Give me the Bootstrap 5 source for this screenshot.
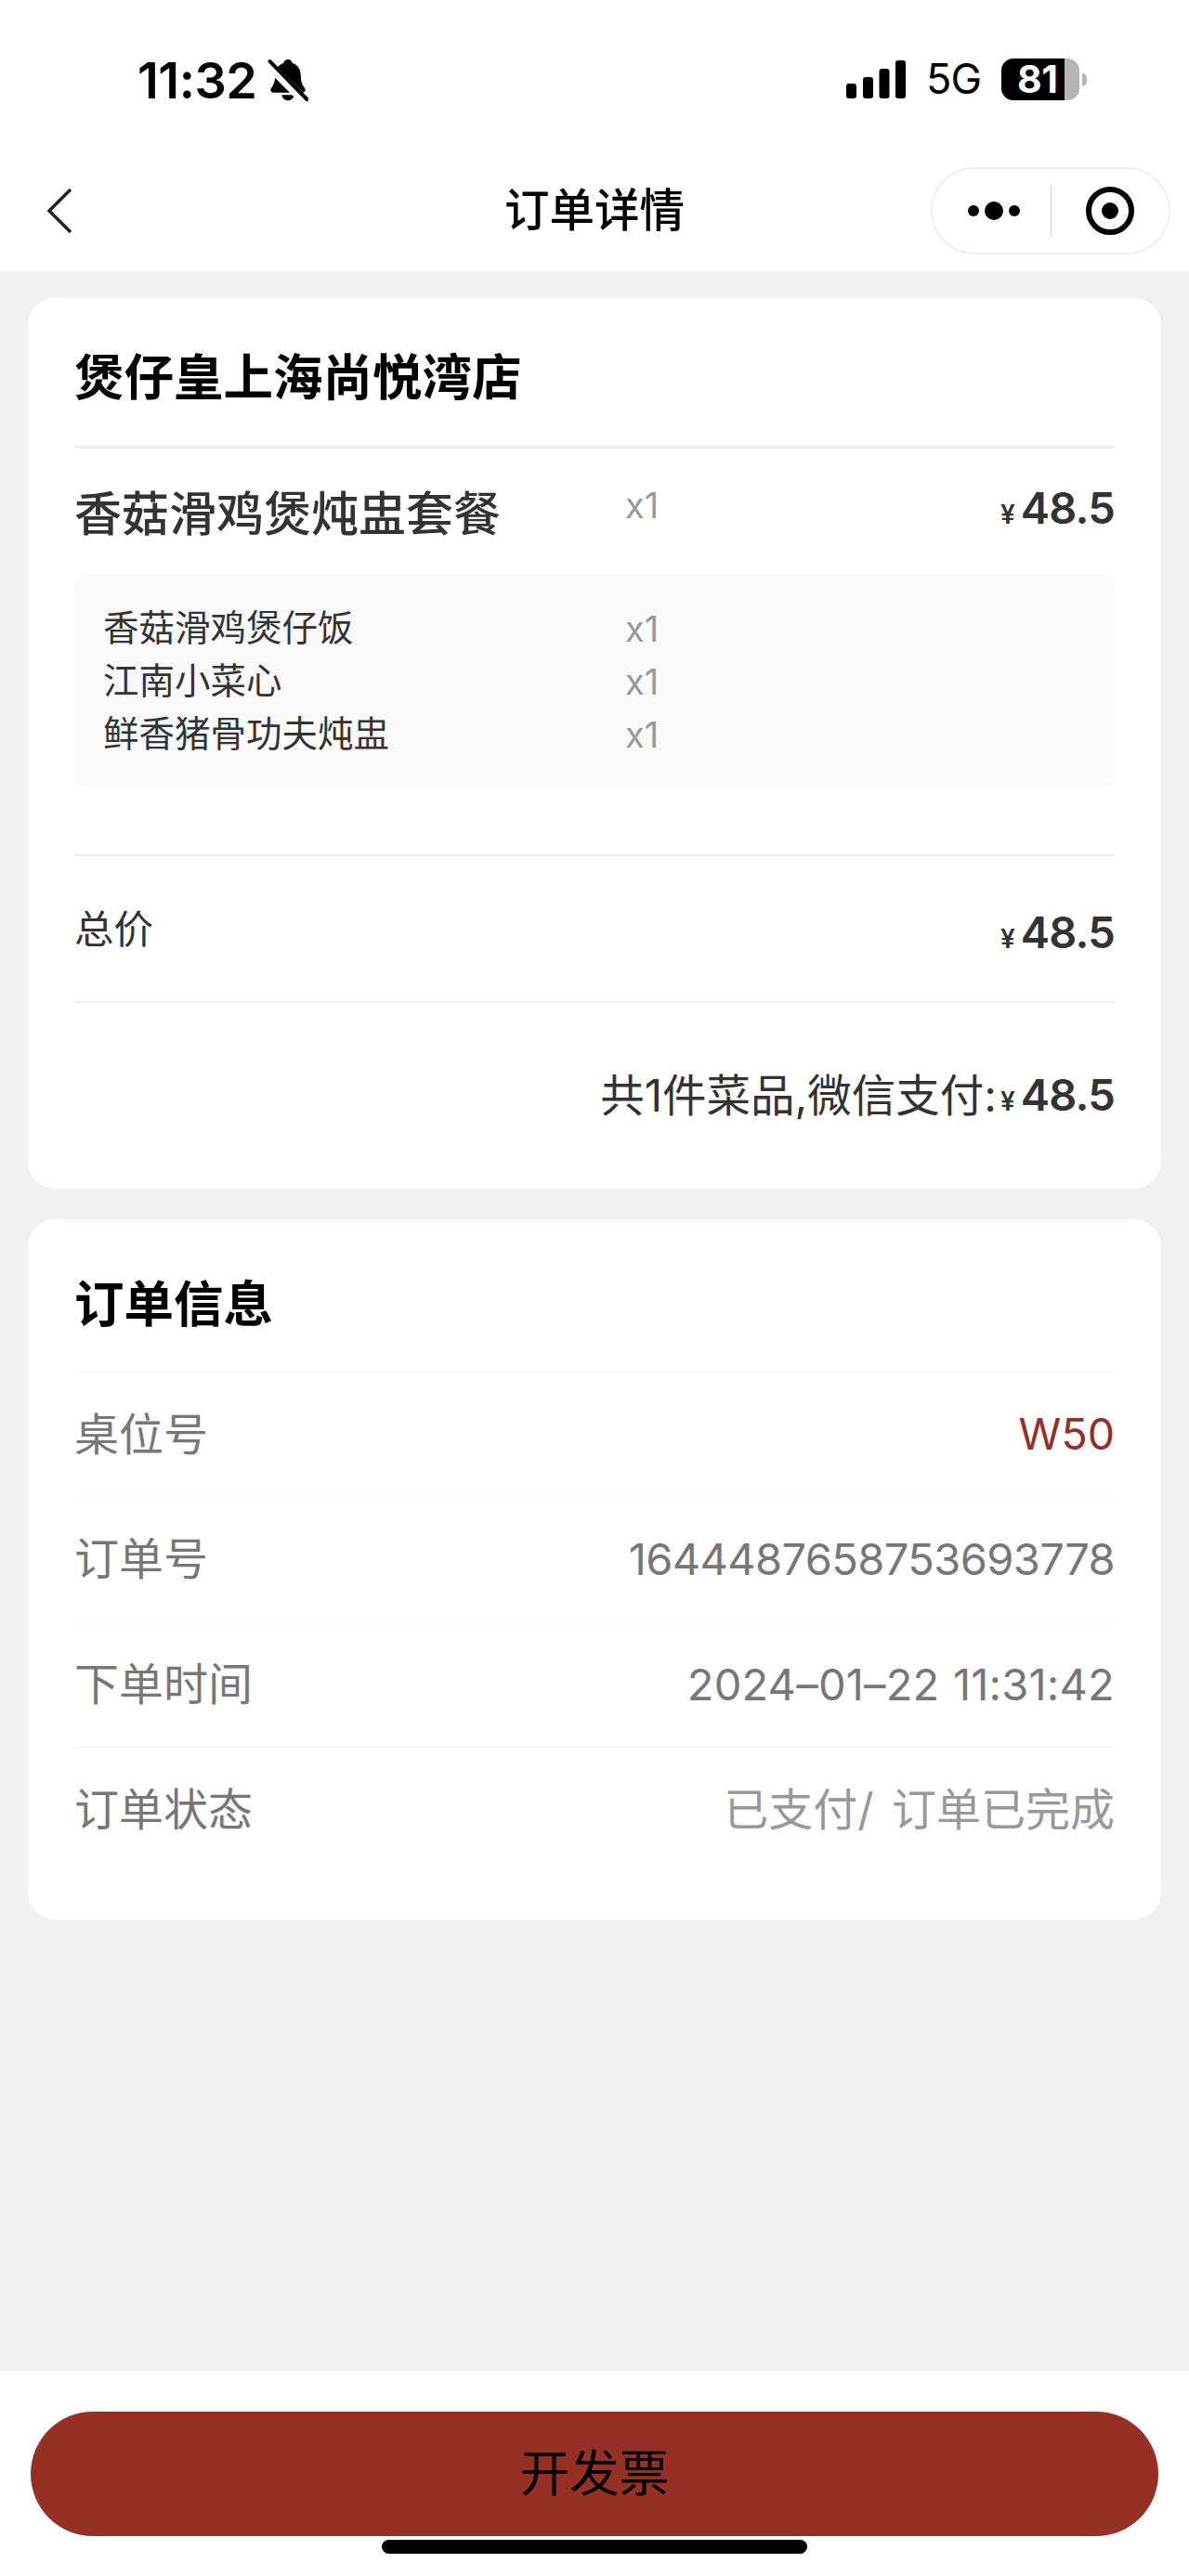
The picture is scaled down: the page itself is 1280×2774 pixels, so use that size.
<!DOCTYPE html>
<html lang="zh-CN">
<head>
<meta charset="utf-8">
<title>订单详情</title>
<link href="https://cdn.jsdelivr.net/npm/bootstrap@5.3.0/dist/css/bootstrap.min.css" rel="stylesheet">
<style>
html,body{height:2774px;}
body{width:1280px;background:#f1f1f1;font-family:Inter,"Noto Sans CJK SC",sans-serif;color:#000;overflow:hidden;}
.page-shell{height:2774px;}
.status-strip{height:172px;padding:63px 110px 0 148px;align-items:flex-start;}
.clock{font-size:54px;line-height:48px;font-weight:600;letter-spacing:-.5px;}
.bell-ico{width:44px;height:46px;margin-left:12px;margin-top:0;}
.sig-ico{width:64px;height:41px;margin-top:2px;}
.net-label{font-size:45px;line-height:44px;margin:0 22px;letter-spacing:-1px;}
.batt-wrap{width:92px;height:45px;}
.batt-body{width:84px;height:45px;border-radius:13px;background:linear-gradient(90deg,#000 0,#000 68px,#b5b5b5 68px);color:#fff;font-size:41px;font-weight:700;line-height:45px;padding-left:17px;letter-spacing:-.5px;}
.batt-nub{width:5px;height:14px;margin-left:3px;background:#b5b5b5;border-radius:0 7px 7px 0;}
.nav-strip{height:120px;padding:0 20px 10px 20px;display:grid;grid-template-columns:1fr auto 1fr;align-items:center;}
.nav-title{font-size:48.500px;line-height:60px;font-weight:500;}
.back-ico{width:28px;height:50px;margin-left:30px;}
.capsule{justify-self:end;width:258px;height:94px;border:2px solid #eee;border-radius:47px;}
.cap-side{flex:1 1 0;}
.cap-dots{margin-left:6px;}
.cap-rule{width:1px;height:56px;background:#ccc;}
.content-area{padding:29px 30px 0;gap:33px;}
.panel{border-radius:30px;padding:0 50px;background:#fff;border:0;}
.panel-title{font-size:53.500px;line-height:68px;font-weight:700;margin:0;}
.panel-a{height:959px;padding-top:52px;}
.panel-a .panel-title{margin-bottom:39px;}
.rule-a{height:3px;background:#eee;}
.rule-b{height:2px;background:#eee;}
.rule-top{margin-top:72px;}
.item-row{height:136px;padding-top:38px;}
.name-col{width:593px;flex:none;}
.item-name{font-size:51px;line-height:66px;font-weight:500;color:#333;}
.qty{font-size:38px;line-height:50px;color:#999;}
.item-row .qty{margin-top:-2px;}
.item-row .amount{margin-top:-4px;}
.amount{margin-left:auto;font-size:47px;line-height:60px;font-weight:600;color:#333;letter-spacing:-.8px;}
.yen{font-size:28px;font-weight:600;margin-right:6px;letter-spacing:0;}
.sub-box{height:229px;background:#f9f9f9;border-radius:10px;padding:29px 31px 0;}
.sub-row{height:57px;align-items:center;}
.sub-name{font-size:38.500px;line-height:57px;color:#333;}
.sub-row .name-col{width:562px;}
.total-row{height:156px;padding-top:50px;}
.total-row .amount{margin-top:2px;}
.total-label{font-size:42.500px;line-height:58px;color:#333;}
.pay-row{height:200px;padding-top:69px;font-size:47.500px;line-height:62px;color:#333;}
.panel-b{height:754px;padding-top:58px;}
.panel-b .panel-title{margin-bottom:38px;}
.info-list .list-group-item{height:134.600px;padding:0;background:transparent;border:0;border-top:1px solid #f5f5f5;font-size:48px;color:#777;}
.info-red{color:#962f24;font-size:46.500px;}
.info-num{font-size:47px;letter-spacing:-.6px;color:#777;}
.info-date{font-size:47px;letter-spacing:.2px;word-spacing:1px;color:#777;}
.info-gray{color:#999;word-spacing:6px;}
.foot-strip{height:221px;padding:44px 33px 0;}
.invoice-btn{display:block;width:100%;height:134px;background:#962f24;border:0;border-radius:67px;color:#000;font-size:53.500px;line-height:134px;padding:0;}
.home-pill{width:458px;height:15px;background:#000;border-radius:8px;margin:4px auto 0;}
</style>
</head>
<body>
<div class="page-shell d-flex flex-column">
  <header class="bg-white">
    <div class="status-strip d-flex justify-content-between">
      <div class="d-flex align-items-start">
        <span class="clock">11:32</span>
        <svg class="bell-ico" viewBox="0 0 42 45" aria-hidden="true">
          <path d="M21 1c2.600 0 4.300 1.800 4.700 3.900C31.500 6.700 34.500 11.500 34.500 18c0 5.500 1.200 9.500 4 13 1.600 2 .6 5-2.200 5H5.700c-2.800 0-3.800-3-2.200-5 2.800-3.500 4-7.500 4-13 0-6.500 3-11.300 8.800-13.100C16.700 2.800 18.400 1 21 1z" fill="#000"/>
          <path d="M14.500 38.500h13c-.5 3.500-3.200 5.800-6.500 5.800s-6-2.300-6.500-5.800z" fill="#000"/>
          <path d="M-1 5l42 42" stroke="#fff" stroke-width="10" fill="none"/>
          <path d="M2 3l39 40" stroke="#000" stroke-width="4" stroke-linecap="round" fill="none"/>
        </svg>
      </div>
      <div class="d-flex align-items-start">
        <svg class="sig-ico" viewBox="0 0 64 41" aria-hidden="true">
          <rect x="0" y="25" width="11" height="16" rx="3" fill="#000"/>
          <rect x="18" y="18" width="11" height="23" rx="3" fill="#000"/>
          <rect x="35.500" y="9" width="11" height="32" rx="3" fill="#000"/>
          <rect x="53" y="0" width="11" height="41" rx="3" fill="#000"/>
        </svg>
        <span class="net-label">5G</span>
        <div class="batt-wrap d-flex align-items-center">
          <div class="batt-body">81</div>
          <div class="batt-nub"></div>
        </div>
      </div>
    </div>
    <div class="nav-strip">
      <svg class="back-ico" viewBox="0 0 28 50" aria-hidden="true"><path d="M26 2L3 25l23 23" fill="none" stroke="#222" stroke-width="3.500"/></svg>
      <div class="nav-title">订单详情</div>
      <div class="capsule d-flex align-items-center">
        <div class="cap-side d-flex justify-content-center">
          <svg class="cap-dots" width="60" height="24" viewBox="0 0 60 24" aria-hidden="true"><circle cx="8" cy="12" r="6" fill="#000"/><circle cx="30" cy="12" r="10" fill="#000"/><circle cx="52" cy="12" r="6" fill="#000"/></svg>
        </div>
        <div class="cap-rule"></div>
        <div class="cap-side d-flex justify-content-center">
          <svg width="52" height="52" viewBox="0 0 52 52" aria-hidden="true"><circle cx="26" cy="26" r="23" fill="none" stroke="#000" stroke-width="6"/><circle cx="26" cy="26" r="9" fill="#000"/></svg>
        </div>
      </div>
    </div>
  </header>

  <main class="content-area d-flex flex-column">
    <section class="card panel panel-a">
      <h1 class="panel-title">煲仔皇上海尚悦湾店</h1>
      <div class="rule-a"></div>
      <div class="item-row d-flex align-items-start">
        <div class="name-col item-name">香菇滑鸡煲炖盅套餐</div>
        <div class="qty">x1</div>
        <div class="amount"><span class="yen">¥</span>48.5</div>
      </div>
      <div class="sub-box">
        <div class="sub-row d-flex"><div class="name-col sub-name">香菇滑鸡煲仔饭</div><div class="qty">x1</div></div>
        <div class="sub-row d-flex"><div class="name-col sub-name">江南小菜心</div><div class="qty">x1</div></div>
        <div class="sub-row d-flex"><div class="name-col sub-name">鲜香猪骨功夫炖盅</div><div class="qty">x1</div></div>
      </div>
      <div class="rule-b rule-top"></div>
      <div class="total-row d-flex align-items-start">
        <div class="total-label">总价</div>
        <div class="amount"><span class="yen">¥</span>48.5</div>
      </div>
      <div class="rule-b"></div>
      <div class="pay-row d-flex justify-content-end align-items-start">
        <span>共1件菜品,微信支付:</span>
        <span class="amount ms-0"><span class="yen ms-1">¥</span>48.5</span>
      </div>
    </section>

    <section class="card panel panel-b">
      <h2 class="panel-title">订单信息</h2>
      <div class="list-group list-group-flush info-list">
        <div class="list-group-item d-flex justify-content-between align-items-center"><span>桌位号</span><span class="info-red">W50</span></div>
        <div class="list-group-item d-flex justify-content-between align-items-center"><span>订单号</span><span class="info-num">1644487658753693778</span></div>
        <div class="list-group-item d-flex justify-content-between align-items-center"><span>下单时间</span><span class="info-date">2024–01–22 11:31:42</span></div>
        <div class="list-group-item d-flex justify-content-between align-items-center"><span>订单状态</span><span class="info-gray">已支付/ 订单已完成</span></div>
      </div>
    </section>
  </main>

  <footer class="foot-strip bg-white mt-auto">
    <button type="button" class="btn invoice-btn">开发票</button>
    <div class="home-pill"></div>
  </footer>
</div>
<script src="https://cdn.jsdelivr.net/npm/bootstrap@5.3.0/dist/js/bootstrap.bundle.min.js"></script>
</body>
</html>
